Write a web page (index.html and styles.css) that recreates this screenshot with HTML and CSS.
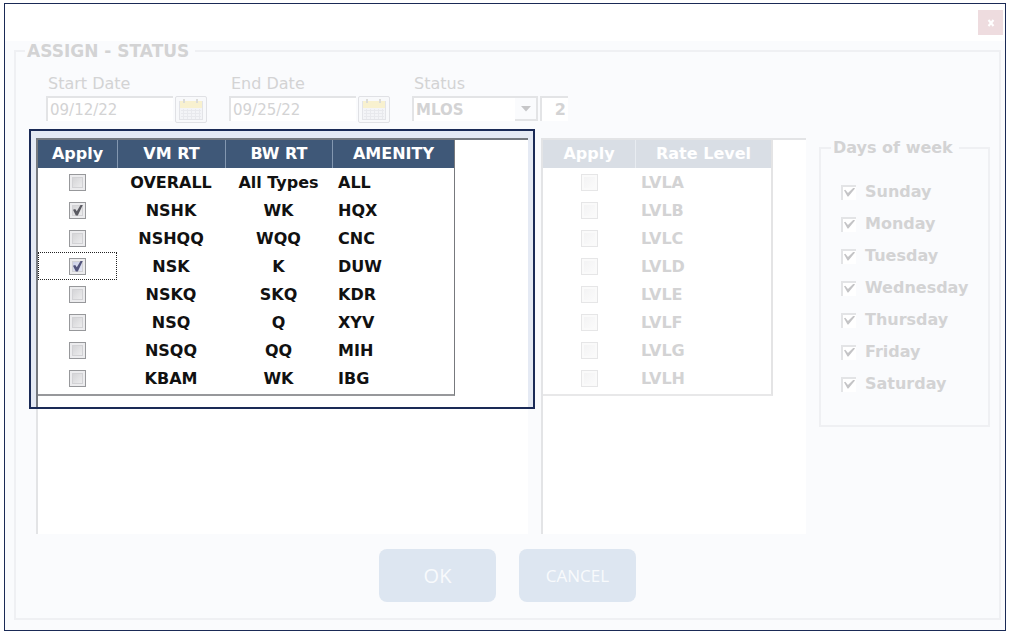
FILE: index.html
```html
<!DOCTYPE html>
<html lang="en">
<head>
  <meta charset="UTF-8" />
  <meta name="viewport" content="width=device-width, initial-scale=1.0"/>
  <title>Assign - Status</title>
  <link rel="stylesheet" href="styles.css">
</head>
<body>

<form class="window">
  <div class="title-bar">
    <button type="button" class="close" aria-label="Close">
      <svg width="8" height="8" viewBox="0 0 8 8"><path d="M1.5 1L6.5 7M6.5 1L1.5 7" stroke="#fff" stroke-width="2" fill="none"/></svg>
    </button>
  </div>

  <fieldset class="assign">
    <legend>ASSIGN - STATUS</legend>

    <div class="fields">
      <div class="field">
        <label for="start">Start Date</label>
        <div class="field-row">
          <input type="text" id="start" class="date" value="09/12/22">
          <button type="button" class="calendar" aria-label="Pick start date">
            <svg width="24" height="23" viewBox="0 0 24 23">
              <rect x="0.5" y="3.5" width="23" height="18" fill="#f3f4f7" stroke="#e3e4e8"/>
              <rect x="1" y="3" width="22" height="7" fill="#f8f1cf"/>
              <path d="M5 1V5M18 1V5" stroke="#dcdcd8" stroke-width="2"/>
              <path d="M2 12.5H22M2 15.5H22M2 18.5H22M4.5 11V21M8.5 11V21M12.5 11V21M16.5 11V21M20.5 11V21" stroke="#e8e9ed"/>
            </svg>
          </button>
        </div>
      </div>
      <div class="field">
        <label for="end">End Date</label>
        <div class="field-row">
          <input type="text" id="end" class="date" value="09/25/22">
          <button type="button" class="calendar" aria-label="Pick end date">
            <svg width="24" height="23" viewBox="0 0 24 23">
              <rect x="0.5" y="3.5" width="23" height="18" fill="#f3f4f7" stroke="#e3e4e8"/>
              <rect x="1" y="3" width="22" height="7" fill="#f8f1cf"/>
              <path d="M5 1V5M18 1V5" stroke="#dcdcd8" stroke-width="2"/>
              <path d="M2 12.5H22M2 15.5H22M2 18.5H22M4.5 11V21M8.5 11V21M12.5 11V21M16.5 11V21M20.5 11V21" stroke="#e8e9ed"/>
            </svg>
          </button>
        </div>
      </div>
      <div class="field">
        <label for="status">Status</label>
        <div class="field-row">
          <div class="select">
            <select id="status"><option>MLOS</option></select>
            <span class="arrow"><svg width="10" height="6" viewBox="0 0 10 6"><path d="M0 0H10L5 5.5Z" fill="#c6c6c8"/></svg></span>
          </div>
          <input type="text" class="nights" value="2" aria-label="Nights">
        </div>
      </div>
    </div>

    <div class="main">
      <div class="rooms">
        <div class="callout">
          <div class="list">
            <table class="grid">
              <thead>
                <tr><th class="apply">Apply</th><th class="vm">VM RT</th><th class="bw">BW RT</th><th class="amenity">AMENITY</th></tr>
              </thead>
              <tbody>
                <tr><td><input type="checkbox" aria-label="OVERALL"></td><td>OVERALL</td><td>All Types</td><td>ALL</td></tr>
                <tr><td><input type="checkbox" aria-label="NSHK" checked></td><td>NSHK</td><td>WK</td><td>HQX</td></tr>
                <tr><td><input type="checkbox" aria-label="NSHQQ"></td><td>NSHQQ</td><td>WQQ</td><td>CNC</td></tr>
                <tr><td class="focused"><input type="checkbox" aria-label="NSK" checked></td><td>NSK</td><td>K</td><td>DUW</td></tr>
                <tr><td><input type="checkbox" aria-label="NSKQ"></td><td>NSKQ</td><td>SKQ</td><td>KDR</td></tr>
                <tr><td><input type="checkbox" aria-label="NSQ"></td><td>NSQ</td><td>Q</td><td>XYV</td></tr>
                <tr><td><input type="checkbox" aria-label="NSQQ"></td><td>NSQQ</td><td>QQ</td><td>MIH</td></tr>
                <tr><td><input type="checkbox" aria-label="KBAM"></td><td>KBAM</td><td>WK</td><td>IBG</td></tr>
              </tbody>
            </table>
          </div>
        </div>
        <div class="list-rest"></div>
      </div>

      <div class="list levels">
        <table class="grid faded">
          <thead>
            <tr><th class="apply">Apply</th><th class="rate">Rate Level</th></tr>
          </thead>
          <tbody>
            <tr><td><input type="checkbox" aria-label="LVLA"></td><td>LVLA</td></tr>
            <tr><td><input type="checkbox" aria-label="LVLB"></td><td>LVLB</td></tr>
            <tr><td><input type="checkbox" aria-label="LVLC"></td><td>LVLC</td></tr>
            <tr><td><input type="checkbox" aria-label="LVLD"></td><td>LVLD</td></tr>
            <tr><td><input type="checkbox" aria-label="LVLE"></td><td>LVLE</td></tr>
            <tr><td><input type="checkbox" aria-label="LVLF"></td><td>LVLF</td></tr>
            <tr><td><input type="checkbox" aria-label="LVLG"></td><td>LVLG</td></tr>
            <tr><td><input type="checkbox" aria-label="LVLH"></td><td>LVLH</td></tr>
          </tbody>
        </table>
      </div>

      <fieldset class="days">
        <legend>Days of week</legend>
        <label><input type="checkbox" checked>Sunday</label>
        <label><input type="checkbox" checked>Monday</label>
        <label><input type="checkbox" checked>Tuesday</label>
        <label><input type="checkbox" checked>Wednesday</label>
        <label><input type="checkbox" checked>Thursday</label>
        <label><input type="checkbox" checked>Friday</label>
        <label><input type="checkbox" checked>Saturday</label>
      </fieldset>
    </div>

    <div class="buttons">
      <button type="button" class="ok">OK</button>
      <button type="button">CANCEL</button>
    </div>
  </fieldset>
</form>

</body>
</html>
```
FILE: styles.css
```css
:root {
  --navy: #1a2a56;
  --header: #3f5878;
  --surface: #fafbfd;
  --line: #eff0f3;
  --edge: #e3e4e6;
  --text-faded: #d3d3d4;
}

* {
  box-sizing: border-box;
}

body {
  margin: 0;
  padding: 3px 4px 4px;
  background: white;
  font-family: "DejaVu Sans", Verdana, sans-serif;
  font-size: 16px;
  line-height: 20px;
  color: var(--text-faded);
}

input,
select,
button {
  margin: 0;
  font-family: inherit;
  color: inherit;
}

fieldset {
  margin: 0;
  min-width: 0;
  border: 2px solid var(--line);
}

legend {
  font-weight: bold;
}

.window {
  border: 1px solid var(--navy);
  background: var(--surface);
  padding-bottom: 10px;
}

.title-bar {
  display: flex;
  justify-content: flex-end;
  height: 37px;
  padding: 6px 2px;
  background: white;
}

.close {
  display: flex;
  align-items: center;
  justify-content: center;
  width: 25px;
  height: 25px;
  padding: 0;
  border: none;
  background: #eedcdf;
}

.assign {
  margin: 0 4px 0 9px;
  padding: 13px 9px 16px;
}

.assign > legend {
  padding: 0 6px 0 2px;
  font-size: 17px;
}

/* top row */
.fields {
  display: flex;
  gap: 22px;
  padding-left: 21px;
}

.field > label {
  display: block;
  padding-left: 2px;
  margin-bottom: 2px;
}

.field-row {
  display: flex;
  align-items: flex-start;
  gap: 2px;
}

.date,
.nights,
.select {
  height: 25px;
  border: solid var(--edge);
  border-width: 2px 0 0 2px;
  background: white;
}

.date {
  width: 127px;
  padding: 0 2px;
  font-size: 15px;
}

.calendar {
  width: 32px;
  height: 27px;
  padding: 1px 3px;
  border: 1px solid #e0e1e5;
  border-radius: 2px;
  background: #f8f9fb;
}

.calendar svg {
  display: block;
}

.select {
  position: relative;
  width: 126px;
}

.select select {
  width: 100%;
  height: 100%;
  padding: 0 2px;
  border: none;
  background: transparent;
  appearance: none;
  font-size: 15px;
  font-weight: bold;
}

.arrow {
  position: absolute;
  top: 0;
  right: 0;
  display: flex;
  align-items: center;
  justify-content: center;
  width: 23px;
  height: 23px;
  border: solid var(--edge);
  border-width: 0 2px 2px 0;
  background: var(--surface);
  pointer-events: none;
}

.nights {
  width: 28px;
  padding: 0 2px;
  font-size: 16px;
  font-weight: bold;
  text-align: right;
}

/* lists */
.main {
  display: flex;
  align-items: flex-start;
  min-height: 405px;
  margin-top: 6px;
  padding-left: 4px;
}

.rooms {
  display: flex;
  flex: 1;
  flex-direction: column;
  align-self: stretch;
  margin-right: 6px;
}

.callout {
  padding: 7px 5px 0;
  border: 2px solid var(--navy);
  background: #e5eaf4;
}

.list {
  border: solid #75797f;
  border-width: 2px 0 0 2px;
  background: white;
}

.callout .list {
  padding-bottom: 11px;
}

.list-rest {
  flex: 1;
  margin: 0 7px;
  border-left: 2px solid var(--edge);
  background: white;
}

.levels {
  align-self: stretch;
  width: 265px;
  margin: 9px 13px 0 0;
  border-color: var(--edge);
}

.grid {
  border-collapse: separate;
  border-spacing: 0;
  border: solid #77797d;
  border-width: 0 1px 2px 0;
  border-bottom-color: #97989b;
  padding-bottom: 2px;
  color: #111;
  font-weight: bold;
}

.grid th {
  height: 28px;
  padding: 0;
  background: var(--header);
  color: white;
}

.grid th + th {
  border-left: 1px solid #8397b0;
}

.grid td {
  height: 28px;
  padding: 2px 0 0;
  text-align: center;
}

.grid td:first-child {
  padding: 0;
}

.grid td:last-child {
  padding-left: 6px;
  text-align: left;
}

.apply {
  width: 79px;
}

.vm {
  width: 108px;
}

.bw {
  width: 107px;
}

.amenity {
  width: 122px;
}

.grid .focused {
  outline: 1px dotted #222;
  outline-offset: -1px;
}

.grid input {
  position: relative;
  display: block;
  width: 17px;
  height: 17px;
  margin: 0 auto;
  appearance: none;
  border: 1px solid #97989b;
  background: linear-gradient(135deg, #cdcdd0, #f4f4f5);
  box-shadow: inset 0 0 0 2px #ececee, inset 0 0 0 3px #d2d2d5;
}

.grid .focused input {
  background: linear-gradient(135deg, #c3c8e2, #eef0fa);
}

.grid input:checked::before,
.days input:checked::before {
  content: "";
  position: absolute;
  top: 2px;
  left: 3px;
  width: 10px;
  height: 11px;
  background: #5a5a62;
  clip-path: polygon(0 48%, 22% 40%, 38% 62%, 78% 0, 100% 0, 48% 100%, 28% 100%);
}

.grid .focused input:checked::before {
  background: #53557c;
}

.faded {
  border-color: #e4e4e5;
  border-right-width: 2px;
  border-bottom-color: #e8e8e9;
  color: var(--text-faded);
}

.faded .apply {
  width: 92px;
}

.faded .rate {
  width: 136px;
}

.faded th {
  background: #d9dee5;
}

.faded th + th {
  border-left-color: #e8ecf1;
}

.faded input {
  border-color: #e6e6e7;
  background: linear-gradient(135deg, #f2f2f3, #fcfcfc);
  box-shadow: inset 0 0 0 2px #fafafa;
}

/* days of week */
.days {
  display: flex;
  flex-direction: column;
  gap: 12px;
  width: 171px;
  margin-top: 9px;
  padding: 24px 0 31px 20px;
}

.days legend {
  margin-left: -10px;
  padding: 0 6px 0 2px;
}

.days label {
  display: flex;
  align-items: center;
  gap: 9px;
  font-weight: bold;
}

.days input {
  position: relative;
  width: 15px;
  height: 15px;
  appearance: none;
  border: solid var(--edge);
  border-width: 2px 0 0 2px;
  background: white;
}

.days input:checked::before {
  top: 1px;
  left: 1px;
  width: 11px;
  height: 9px;
  background: #c4c4c6;
  clip-path: polygon(0 30%, 12% 24%, 36% 62%, 88% 0, 100% 12%, 40% 100%, 32% 100%);
}

/* bottom buttons */
.buttons {
  display: flex;
  justify-content: center;
  gap: 23px;
  margin-top: 15px;
}

.buttons button {
  width: 117px;
  height: 53px;
  border: none;
  border-radius: 8px;
  background: #dde6f1;
  color: #f8fafc;
  font-family: "Open Sans", sans-serif;
  font-size: 17px;
}

.buttons .ok {
  font-size: 20px;
}
```
